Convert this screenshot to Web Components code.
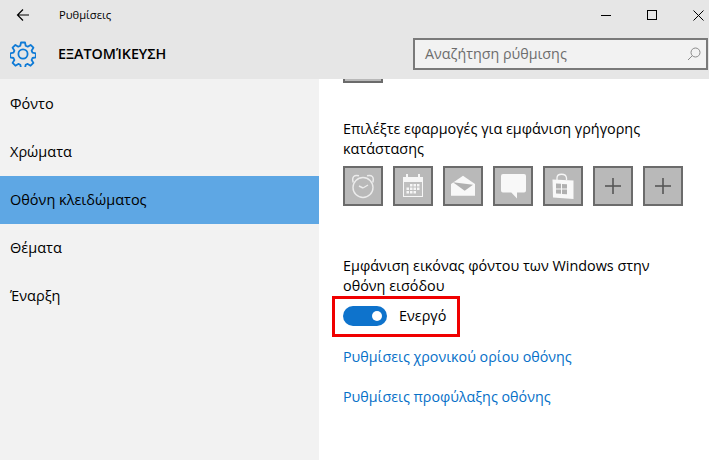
<!DOCTYPE html>
<html>
<head>
<meta charset="utf-8">
<style>
  html, body { margin: 0; height: 100%; overflow: hidden; }
  body { font-family: "Open Sans", "Noto Sans", sans-serif; }
</style>
</head>
<body>
<settings-window></settings-window>
<script>
const titleTemplate = document.createElement('template');
titleTemplate.innerHTML = `
  <style>
    :host { display: block; background: #e6e6e6; height: 79px; flex-shrink: 0; color: #000; }
    .top { display: flex; align-items: center; height: 30px; }
    .back { width: 16px; height: 16px; margin-left: 15px; }
    .title { margin-left: 28px; font-size: 11.2px; flex: 1; }
    .win { display: flex; align-items: center; gap: 35px; margin-right: 5px; }
    .win svg { display: block; width: 11px; height: 11px; }
    .head { display: flex; align-items: center; height: 49px; padding-bottom: 2px; box-sizing: border-box; }
    .gear { width: 26px; height: 26px; margin-left: 10px; }
    .name { margin-left: 22px; font-size: 14.3px; font-weight: 600; flex: 1; }
  </style>
  <div class="top">
    <svg class="back" viewBox="0 0 16 16" fill="none" stroke="#000" stroke-width="1.2"><path d="M14 8H2.500M8 2.500 2.500 8 8 13.500"/></svg>
    <span class="title">Ρυθμίσεις</span>
    <div class="win">
      <svg viewBox="0 0 11 11" stroke="#000" stroke-width="1"><path d="M0 5.500h10"/></svg>
      <svg viewBox="0 0 11 11" fill="none" stroke="#000" stroke-width="1"><rect x=".5" y=".5" width="9" height="9"/></svg>
      <svg viewBox="0 0 11 11" stroke="#000" stroke-width="1"><path d="M.5.5l10 10M10.500.5l-10 10"/></svg>
    </div>
  </div>
  <div class="head">
    <svg class="gear" viewBox="0 0 26 26" fill="none" stroke="#0e7ad6" stroke-width="1.8" stroke-linejoin="round">
      <path d="M11 1.500h4l.7 3.300 2 .9 2.900-1.800 2.800 2.800-1.800 2.900.9 2 3.300.7v4l-3.300.7-.9 2 1.800 2.900-2.800 2.800-2.900-1.800-2 .9-.7 3.300h-4l-.7-3.300-2-.9-2.900 1.800-2.800-2.800 1.800-2.900-.9-2-3.300-.7v-4l3.300-.7.9-2-1.800-2.900 2.800-2.800 2.900 1.800 2-.9z"/>
      <circle cx="13" cy="13" r="4.600"/>
    </svg>
    <span class="name">ΕΞΑΤΟΜΊΚΕΥΣΗ</span>
    <search-box></search-box>
  </div>
`;
class TitleArea extends HTMLElement {
  constructor() {
    super();
    this.attachShadow({ mode: 'open' }).appendChild(titleTemplate.content.cloneNode(true));
  }
}
customElements.define('title-area', TitleArea);

const searchTemplate = document.createElement('template');
searchTemplate.innerHTML = `
  <style>
    :host { display: flex; align-items: center; box-sizing: border-box; width: 295px; height: 32px; border: 2px solid #7a7a7a; background: #f2f2f2; margin-right: 1px; padding: 0 5px 0 10px; }
    span { flex: 1; font-size: 14.3px; color: #6d6d6d; }
    svg { width: 14px; height: 14px; }
  </style>
  <span>Αναζήτηση ρύθμισης</span>
  <svg viewBox="0 0 14 14" fill="none" stroke="#8a8a8a" stroke-width="1"><circle cx="8.500" cy="5.500" r="4.500"/><path d="M5.300 8.700 1 13"/></svg>
`;
class SearchBox extends HTMLElement {
  constructor() {
    super();
    this.attachShadow({ mode: 'open' }).appendChild(searchTemplate.content.cloneNode(true));
  }
}
customElements.define('search-box', SearchBox);

const navTemplate = document.createElement('template');
navTemplate.innerHTML = `
  <style>
    :host { display: flex; align-items: center; height: 48px; padding-left: 10px; font-size: 14.5px; color: #000; }
    :host([active]) { background: #5ea7e4; }
  </style>
  <slot></slot>
`;
class NavItem extends HTMLElement {
  constructor() {
    super();
    this.attachShadow({ mode: 'open' }).appendChild(navTemplate.content.cloneNode(true));
  }
}
customElements.define('nav-item', NavItem);

const tileTemplate = document.createElement('template');
tileTemplate.innerHTML = `
  <style>
    :host { display: flex; align-items: center; justify-content: center; box-sizing: border-box; width: 40px; height: 40px; border: 2px solid #6b6b6b; background: #b9b9b9; }
    ::slotted(svg) { display: block; width: 30px; height: 30px; }
  </style>
  <slot></slot>
`;
class AppTile extends HTMLElement {
  constructor() {
    super();
    this.attachShadow({ mode: 'open' }).appendChild(tileTemplate.content.cloneNode(true));
  }
}
customElements.define('app-tile', AppTile);

const toggleTemplate = document.createElement('template');
toggleTemplate.innerHTML = `
  <style>
    :host { display: flex; align-items: center; position: relative; font-size: 14.4px; color: #000; height: 20px; }
    .track { width: 44px; height: 20px; border-radius: 10px; background: #0e73cc; position: relative; }
    .knob { position: absolute; right: 5px; top: 5px; width: 10px; height: 10px; border-radius: 50%; background: #fff; }
    .label { margin-left: 12px; }
    .mark { position: absolute; left: -11px; top: -10px; width: 128px; height: 41px; box-sizing: border-box; border: 3px solid #f00000; }
  </style>
  <div class="track"><div class="knob"></div></div>
  <span class="label"><slot></slot></span>
  <div class="mark"></div>
`;
class ToggleSwitch extends HTMLElement {
  constructor() {
    super();
    this.attachShadow({ mode: 'open' }).appendChild(toggleTemplate.content.cloneNode(true));
  }
}
customElements.define('toggle-switch', ToggleSwitch);

const windowTemplate = document.createElement('template');
windowTemplate.innerHTML = `
  <style>
    :host { display: flex; flex-direction: column; width: 709px; height: 460px; background: #fff; overflow: hidden; line-height: 20px; }
    .body { display: flex; flex: 1; min-height: 0; }
    .side { width: 319px; flex-shrink: 0; background: #f2f2f2; padding-top: 1px; }
    .main { flex: 1; padding: 0 24px; font-size: 14.4px; color: #000; overflow: hidden; }
    .stub { width: 40px; height: 4px; box-sizing: border-box; background: #b9b9b9; border: 2px solid #6b6b6b; border-top: 0; }
    p { margin: 0; }
    .apps { margin-top: 36px; }
    .tiles { display: flex; gap: 10px; margin-top: 7px; }
    .lock { margin-top: 50px; }
    toggle-switch { margin-top: 10px; }
    a { display: block; color: #0670c8; text-decoration: none; font-size: 14.3px; }
    .l1 { margin-top: 21px; }
    .l2 { margin-top: 20px; }
  </style>
  <title-area></title-area>
  <div class="body">
    <nav class="side">
      <nav-item>Φόντο</nav-item>
      <nav-item>Χρώματα</nav-item>
      <nav-item active>Οθόνη κλειδώματος</nav-item>
      <nav-item>Θέματα</nav-item>
      <nav-item>Έναρξη</nav-item>
    </nav>
    <main class="main">
      <div class="stub"></div>
      <p class="apps">Επιλέξτε εφαρμογές για εμφάνιση γρήγορης<br>κατάστασης</p>
      <div class="tiles">
        <app-tile>
          <svg viewBox="0 0 30 30" fill="none" stroke="#ececec" stroke-width="1.400"><circle cx="15" cy="16.500" r="10"/><path d="M5.200 11.500C3.500 6 6 3.500 11 4.800M24.800 11.500C26.500 6 24 3.500 19 4.800"/><path d="M15 17l5-3M15 17l-4-2"/></svg>
        </app-tile>
        <app-tile>
          <svg viewBox="0 0 30 30"><path fill="#f6f6f6" d="M5 6h3V3h2v3h10V3h2v3h3v20H5z"/><path fill="#bfbfbf" d="M6 11h18v14H6z"/><path fill="#f6f6f6" d="M12 13h2.500v2.500H12zM15.500 13H18v2.500h-2.500zM19 13h2.500v2.500H19zM8.500 16.500H11V19H8.500zM12 16.500h2.500V19H12zM15.500 16.500H18V19h-2.500zM19 16.500h2.500V19H19zM8.500 20H11v2.500H8.500zM12 20h2.500v2.500H12zM15.500 20H18v2.500h-2.500z"/></svg>
        </app-tile>
        <app-tile>
          <svg viewBox="0 0 30 30"><path fill="#f8f8f8" d="M3 13 15 4.700 27 13v11.700H3z"/><path fill="#b0b0b0" d="M5 11.300l20 2.400-8.300 6z"/></svg>
        </app-tile>
        <app-tile>
          <svg viewBox="0 0 30 30"><path fill="#f8f8f8" d="M5 3h21a2 2 0 0 1 2 2v14.500a2 2 0 0 1-2 2h-7v6l-5.700-6H5a2 2 0 0 1-2-2V5a2 2 0 0 1 2-2z"/></svg>
        </app-tile>
        <app-tile>
          <svg viewBox="0 0 30 30"><path fill="none" stroke="#f6f6f6" stroke-width="1.300" d="M9 9V7c0-5 9-5 9.500 0v2"/><path fill="#f8f8f8" d="M4.500 8.500 25.500 9.500v18.500L5 26.500z"/><path fill="#b0b0b0" d="M8 12.500l5 .3v4.700H8zM14 12.900l5 .3v4.300h-5zM8 18.500h5v4.300l-5-.4zM14 18.500h5v4.800l-5-.4z"/></svg>
        </app-tile>
        <app-tile>
          <svg viewBox="0 0 30 30"><path stroke="#6a6a6a" stroke-width="2" d="M15 7v16M7 15h16"/><path fill="#2e2e2e" d="M14.500 14.500h1v1h-1z"/></svg>
        </app-tile>
        <app-tile>
          <svg viewBox="0 0 30 30"><path stroke="#6a6a6a" stroke-width="2" d="M15 7v16M7 15h16"/><path fill="#2e2e2e" d="M14.500 14.500h1v1h-1z"/></svg>
        </app-tile>
      </div>
      <p class="lock">Εμφάνιση εικόνας φόντου των Windows στην<br>οθόνη εισόδου</p>
      <toggle-switch>Ενεργό</toggle-switch>
      <a class="l1">Ρυθμίσεις χρονικού ορίου οθόνης</a>
      <a class="l2">Ρυθμίσεις προφύλαξης οθόνης</a>
    </main>
  </div>
`;
class SettingsWindow extends HTMLElement {
  constructor() {
    super();
    this.attachShadow({ mode: 'open' }).appendChild(windowTemplate.content.cloneNode(true));
  }
}
customElements.define('settings-window', SettingsWindow);
</script>
</body>
</html>
